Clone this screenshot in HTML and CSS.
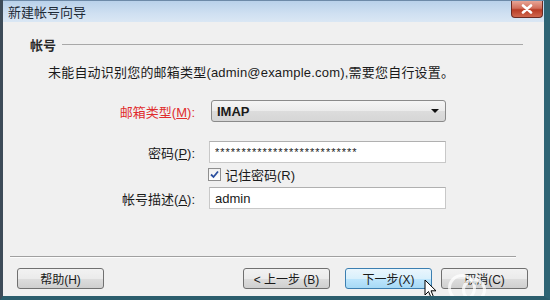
FILE: index.html
```html
<!DOCTYPE html>
<html lang="zh-CN">
<head>
  <meta charset="UTF-8">
  <title>新建帐号向导</title>
  <link rel="stylesheet" href="styles.css">
</head>
<body>

<div class="window">
  <div class="titlebar">
    <span class="title">新建帐号向导</span>
    <button class="btn-close" aria-label="关闭">
      <svg width="14" height="10" viewBox="0 0 14 10"><path d="M3 1.5 L11 8.5 M11 1.5 L3 8.5" stroke="#fff" stroke-width="2.6" stroke-linecap="round"/></svg>
    </button>
  </div>

  <div class="content">
    <div class="group-head">
      <span>帐号</span>
      <div class="group-line"></div>
    </div>

    <p class="message">未能自动识别您的邮箱类型(admin@example.com),需要您自行设置。</p>

    <div class="form">
      <div class="row row-type">
        <label class="label label-red">邮箱类型(<u>M</u>):</label>
        <div class="select">
          <span>IMAP</span>
          <span class="arrow"></span>
        </div>
      </div>
      <div class="row row-pass">
        <label class="label">密码(<u>P</u>):</label>
        <input class="field field-pass" type="text" value="***************************">
      </div>
      <div class="row row-check">
        <span class="label"></span>
        <div class="check">
          <span class="box">
            <svg width="9" height="9" viewBox="0 0 9 9"><path d="M1 4.5 L3.5 7 L8 1.5" fill="none" stroke="#2b4f9e" stroke-width="1.8"/></svg>
          </span>
          <span>记住密码(R)</span>
        </div>
      </div>
      <div class="row row-desc">
        <label class="label">帐号描述(<u>A</u>):</label>
        <input class="field" type="text" value="admin">
      </div>
    </div>

    <div class="footer">
      <div class="separator"></div>
      <div class="buttons">
        <button class="btn">帮助(H)</button>
        <div class="spacer"></div>
        <button class="btn">&lt; 上一步 (B)</button>
        <button class="btn btn-default">下一步(X)</button>
        <button class="btn">取消(C)</button>
      </div>
    </div>
  </div>

  <!-- 水印和鼠标指针 -->
  <div class="watermark">
    <span class="ring ring-1"></span>
    <span class="ring ring-2"></span>
  </div>
  <svg class="cursor" width="13" height="21" viewBox="0 0 13 21">
    <path d="M1 1 L1 16 L4.5 12.5 L7.5 19.5 L9.8 18.5 L7 11.8 L12 11.8 Z" fill="#fff" stroke="#000" stroke-width="1" stroke-linejoin="round"/>
  </svg>
</div>

</body>
</html>
```

FILE: styles.css
```css
body {
  margin: 0;
  font-family: "Liberation Sans", "Noto Sans CJK SC", sans-serif;
  font-size: 13px;
  color: #1a1a1a;
}
.window {
  position: relative;
  width: 550px;
  height: 300px;
  box-sizing: border-box;
  border-left: 3px solid #3d4b58;
  border-right: 6px solid #2e6474;
  border-bottom: 4px solid #2b5d6c;
  background: #f0f0f0;
  display: flex;
  flex-direction: column;
  overflow: hidden;
}
.titlebar {
  height: 22px;
  flex: none;
  display: flex;
  align-items: center;
  justify-content: space-between;
  padding: 0 0 0 5px;
  background: linear-gradient(to bottom, #b9d1ea, #cfe0f1 60%, #dae7f4);
  border-top: 1px solid #6d8aa8;
  box-sizing: border-box;
}
.title {
  color: #1e2a36;
  font-size: 13px;
}
.btn-close {
  width: 32px;
  height: 17px;
  margin-top: -4px;
  margin-right: 1px;
  padding: 0;
  border: 1px solid #6b2b22;
  border-top: none;
  border-radius: 0 0 4px 4px;
  background: linear-gradient(to bottom, #e8a596, #d16e5a 45%, #b83c25 55%, #d0684f);
  display: flex;
  align-items: center;
  justify-content: center;
}
.content {
  flex: 1;
  display: flex;
  flex-direction: column;
}
.group-head {
  display: flex;
  align-items: center;
  gap: 6px;
  margin: 14px 21px 0 27px;
  height: 16px;
  font-weight: bold;
  color: #2a2a2a;
}
.group-line {
  flex: 1;
  border-top: 1px solid #a8a8a8;
}
.message {
  margin: 13px 0 0 45px;
  line-height: 16px;
  letter-spacing: 0.2px;
}
.form {
  margin-top: 19px;
}
.row {
  display: flex;
  align-items: center;
  gap: 14px;
}
.label {
  width: 192px;
  text-align: right;
  flex: none;
}
.label-red { color: #e02c2c; }
.select {
  width: 235px;
  height: 22px;
  box-sizing: border-box;
  border: 1px solid #8a8a8a;
  border-radius: 3px;
  background: linear-gradient(to bottom, #f5f5f5, #ebebeb 50%, #dcdcdc 51%, #d6d6d6);
  display: flex;
  align-items: center;
  justify-content: space-between;
  padding: 0 6px 0 5px;
  margin-left: 2px;
  font-weight: bold;
}
.arrow {
  width: 0;
  height: 0;
  border-left: 4px solid transparent;
  border-right: 4px solid transparent;
  border-top: 4px solid #111;
}
.field {
  width: 237px;
  height: 22px;
  box-sizing: border-box;
  border: 1px solid #c8c8c8;
  border-top-color: #b0b0b0;
  background: #fff;
  font: inherit;
  color: #1a1a1a;
  padding: 0 5px;
  margin: 0;
  outline: none;
}
.field-pass {
  font-size: 11px;
  letter-spacing: 1px;
}
.row-pass { margin-top: 19px; }
.row-check { margin-top: 2px; height: 19px; }
.row-desc { margin-top: 3px; }
.check {
  display: flex;
  align-items: center;
  gap: 4px;
  margin-left: -1px;
}
.box {
  width: 11px;
  height: 11px;
  border: 1px solid #8f8f8f;
  background: linear-gradient(to bottom, #f0f0f0, #fff);
  display: flex;
  align-items: center;
  justify-content: center;
}
.footer {
  margin-top: auto;
  padding-bottom: 7px;
}
.separator {
  margin: 0 28px 0 7px;
  border-top: 1px solid #a0a0a0;
  border-bottom: 1px solid #fcfcfc;
}
.buttons {
  display: flex;
  gap: 9px;
  margin: 10px 16px 0 14px;
}
.spacer { flex: 1; }
.btn {
  width: 87px;
  height: 21px;
  padding: 0;
  border: 1px solid #707070;
  border-radius: 3px;
  background: linear-gradient(to bottom, #f2f2f2, #ebebeb 50%, #dddddd 51%, #cfcfcf);
  font: inherit;
  font-size: 12px;
  color: #1a1a1a;
}
.btn-default {
  border-color: #3c7fb1;
  background: linear-gradient(to bottom, #eaf6fd, #d9f0fc 50%, #bee6fd 51%, #a7d9f5);
}
.btn + .btn-default { margin-left: 6px; }
.watermark {
  position: absolute;
  left: 437px;
  top: 262px;
  width: 110px;
  height: 40px;
  pointer-events: none;
}
.ring {
  position: absolute;
  border: 3px solid rgba(255, 255, 255, 0.75);
  border-radius: 50%;
}
.ring-1 { left: 8px; top: 12px; width: 22px; height: 22px; }
.ring-2 { left: 22px; top: 16px; width: 18px; height: 18px; }
.cursor {
  position: absolute;
  left: 421px;
  top: 279px;
}
```
